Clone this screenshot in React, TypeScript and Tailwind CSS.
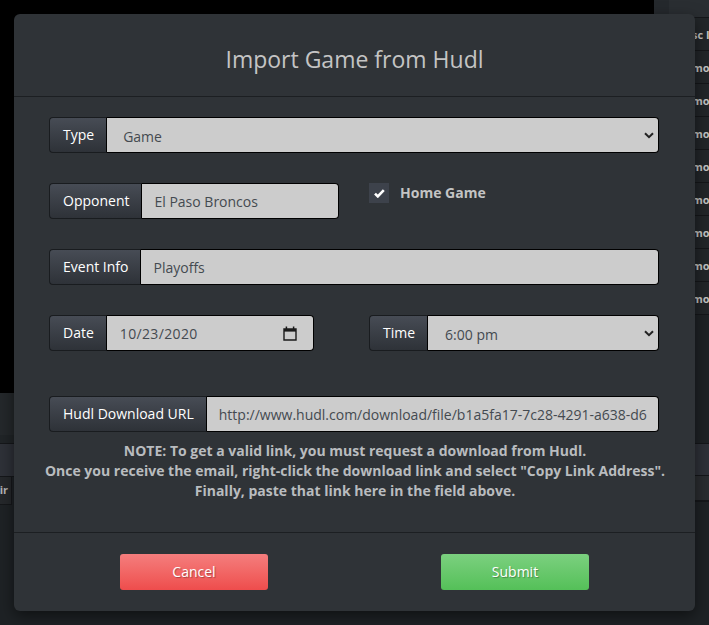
const labelClass =
  "flex items-center pl-[13px] pr-[12px] pb-[2px] border border-[#191c1f] border-r-black bg-gradient-to-b from-[#474c55] to-[#2e3238] text-[14px] text-white shrink-0 rounded-l-[4px]";
const fieldClass =
  "flex items-center h-full flex-1 min-w-0 bg-[#cccccc] border border-black border-l-0 rounded-r-[4px] text-[14px] text-[#444a50]";

function Chevron() {
  return (
    <svg width="10" height="7" viewBox="0 0 10 7" className="mr-[4px] shrink-0">
      <path d="M1 1.2 L5 5.2 L9 1.2" fill="none" stroke="#222" strokeWidth="2" />
    </svg>
  );
}

function Label({ text }: { text: string }) {
  return <div className={labelClass}>{text}</div>;
}

function Row({ label, children, className }: { label: string; children: React.ReactNode; className?: string }) {
  return (
    <div className={`flex h-[36px] ${className ?? ""}`}>
      <Label text={label} />
      {children}
    </div>
  );
}

const rowLabels = ["sc I", "mo", "mo", "mo", "mo", "mo", "mo", "mo", "mo"];

export default function App() {
  return (
    <div
      className="relative w-[709px] h-[625px] overflow-hidden bg-[#1e2225]"
      style={{ fontFamily: '"Open Sans", sans-serif' }}
    >
      {/* page behind the modal */}
      <div className="absolute inset-0 flex">
        <div className="flex-1 flex flex-col">
          <div className="h-[393px] bg-black" />
          <div className="h-[42px] bg-[#24282b]" />
          <div className="h-[9px] bg-[#202427] border-b border-[#15171a]" />
          <div className="h-[33px] bg-[#2e3138] border-b border-[#15171a]" />
          <div className="h-[28px] w-[12px] pr-[3px] bg-[#25282b] border-r border-b border-[#15171a] text-[11px] font-bold text-[#b5b5b5] flex items-center justify-end">
            ir
          </div>
        </div>
        <div className="w-[55px] flex flex-col">
          <div className="h-[18px] bg-[#25292d] border-b border-[#15171a] pl-[15px]">
            <div className="h-full bg-[#2a2e32]" />
          </div>
          {rowLabels.map((t, i) => (
            <div
              key={i}
              className="h-[33px] pt-[2px] bg-[#222629] border-b border-[#15171a] flex items-center pl-[38px] text-[11px] font-bold text-[#c4c4c4] whitespace-nowrap overflow-hidden"
            >
              {t}
            </div>
          ))}
          <div className="h-[128px]" />
          <div className="h-[33px] bg-[#2e3138] border-y border-[#15171a]" />
          <div className="h-[26px] bg-[#2a2d30] border-b-2 border-[#15171a]" />
        </div>
      </div>

      {/* modal */}
      <div className="absolute left-[14px] top-[14px] w-[681px] h-[597px] bg-[#2f3337] rounded-[6px] shadow-[0_5px_15px_rgba(0,0,0,0.5)] flex flex-col">
        <div className="h-[83px] shrink-0 border-b border-[#1c1f22] flex items-center justify-center pt-[8px] text-[23px] text-[#c4c4c4]">
          Import Game from Hudl
        </div>

        <div className="flex-1 pt-[20px] pl-[35px] pr-[36px] flex flex-col">
          <Row label="Type">
            <div className={`${fieldClass} justify-between pl-[16px]`}>
              <span className="mt-[2px]">Game</span>
              <Chevron />
            </div>
          </Row>

          <div className="flex mt-[30px] h-[36px]">
            <Row label="Opponent" className="w-[290px]">
              <div className={`${fieldClass} pl-[12px]`}>El Paso Broncos</div>
            </Row>
            <div className="flex items-start ml-[30px]">
              <div className="w-[20px] h-[20px] bg-[#3d424b] flex items-center justify-center">
                <svg width="11" height="9" viewBox="0 0 11 9" className="ml-[1px] mt-[1px]">
                  <path d="M1 4.6 L3.8 7.4 L9.8 1.2" fill="none" stroke="#fff" strokeWidth="2.6" />
                </svg>
              </div>
              <span className="ml-[11px] text-[14px] font-bold text-[#c4c4c4] leading-[19px]">Home Game</span>
            </div>
          </div>

          <Row label="Event Info" className="mt-[30px]">
            <div className={`${fieldClass} pl-[12px]`}>Playoffs</div>
          </Row>

          <div className="flex mt-[30px] gap-[55px]">
            <Row label="Date" className="w-[265px]">
              <div className={`${fieldClass} justify-between pl-[13px] pr-[16px] tracking-[0.35px]`}>
                <span>10/23/2020</span>
                <svg width="14" height="15" viewBox="0 0 14 15">
                  <path d="M1 3h12v11H1z" fill="none" stroke="#1a1a1a" strokeWidth="1.4" />
                  <path d="M1 3h12v2.6H1z" fill="#1a1a1a" />
                  <path d="M3.4 .6v3M10.6 .6v3" stroke="#1a1a1a" strokeWidth="1.5" />
                </svg>
              </div>
            </Row>
            <Row label="Time" className="flex-1">
              <div className={`${fieldClass} justify-between pl-[17px]`}>
                <span className="mt-[2px]">6:00 pm</span>
                <Chevron />
              </div>
            </Row>
          </div>

          <Row label="Hudl Download URL" className="mt-[45px]">
            <div className={`${fieldClass} pl-[12px] pr-[13px] overflow-hidden whitespace-nowrap`}>
              http://www.hudl.com/download/file/b1a5fa17-7c28-4291-a638-d6
            </div>
          </Row>

          <p className="mt-[9px] -ml-[8px] -mr-[10px] text-center text-[14px] leading-[20px] font-bold text-[#b9bcbf] whitespace-nowrap">
            NOTE: To get a valid link, you must request a download from Hudl.
            <br />
            Once you receive the email, right-click the download link and select "Copy Link Address".
            <br />
            Finally, paste that link here in the field above.
          </p>
        </div>

        <div className="h-[79px] shrink-0 border-t border-[#1c1f22] flex justify-center gap-[173px] pt-[21px]">
          <button className="w-[148px] h-[36px] pb-[2px] rounded-[3px] bg-gradient-to-b from-[#f47d7d] to-[#ee4c4c] text-[14px] text-white [text-shadow:1px_1px_1px_rgba(0,0,0,0.3)]">
            Cancel
          </button>
          <button className="w-[148px] h-[36px] pb-[2px] rounded-[3px] bg-gradient-to-b from-[#7bd07f] to-[#54c058] text-[14px] text-white [text-shadow:1px_1px_1px_rgba(0,0,0,0.3)]">
            Submit
          </button>
        </div>
      </div>
    </div>
  );
}
